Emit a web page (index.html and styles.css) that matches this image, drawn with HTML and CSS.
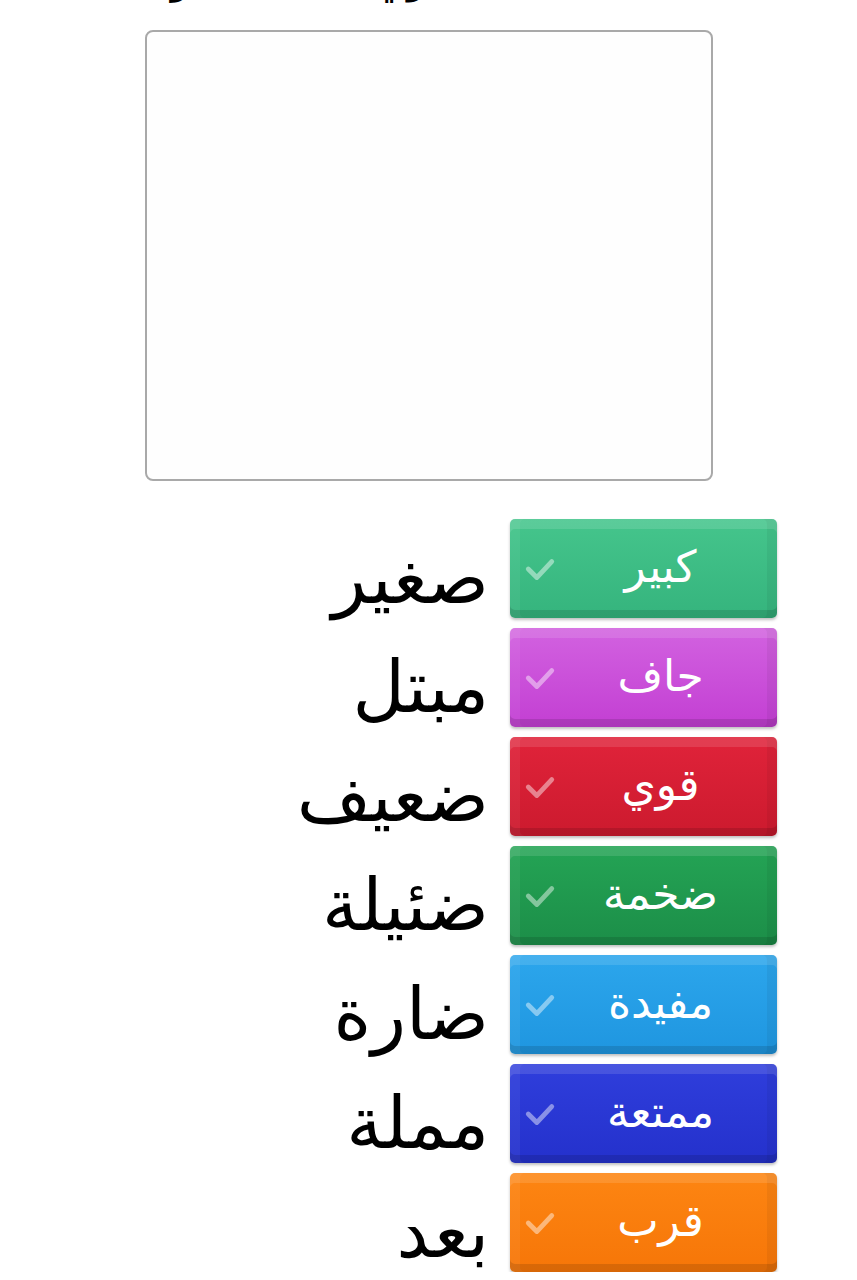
FILE: index.html
```html
<!doctype html>
<html lang="ar" dir="rtl">
<head>
    <meta charset="UTF-8">
    <meta name="viewport" content="width=device-width, initial-scale=1.0">
    <title>الأضداد</title>
    <link rel="stylesheet" href="styles.css">
</head>
<body>
    <h1 class="question">اكتب جملة مفيدة تحتوي على كلمة وضدها</h1>
    <div class="answer">
        <textarea class="answer-box"></textarea>
    </div>
    <ul class="pairs">
        <li class="pair">
            <button class="chip chip-mint"><span class="chip-text">كبير</span><svg class="tick" viewBox="0 0 30 24"><polyline points="4,12 12,20 26,5"/></svg></button>
            <span class="word">صغير</span>
        </li>
        <li class="pair">
            <button class="chip chip-violet"><span class="chip-text">جاف</span><svg class="tick" viewBox="0 0 30 24"><polyline points="4,12 12,20 26,5"/></svg></button>
            <span class="word">مبتل</span>
        </li>
        <li class="pair">
            <button class="chip chip-red"><span class="chip-text">قوي</span><svg class="tick" viewBox="0 0 30 24"><polyline points="4,12 12,20 26,5"/></svg></button>
            <span class="word">ضعيف</span>
        </li>
        <li class="pair">
            <button class="chip chip-green"><span class="chip-text">ضخمة</span><svg class="tick" viewBox="0 0 30 24"><polyline points="4,12 12,20 26,5"/></svg></button>
            <span class="word">ضئيلة</span>
        </li>
        <li class="pair">
            <button class="chip chip-sky"><span class="chip-text">مفيدة</span><svg class="tick" viewBox="0 0 30 24"><polyline points="4,12 12,20 26,5"/></svg></button>
            <span class="word">ضارة</span>
        </li>
        <li class="pair">
            <button class="chip chip-blue"><span class="chip-text">ممتعة</span><svg class="tick" viewBox="0 0 30 24"><polyline points="4,12 12,20 26,5"/></svg></button>
            <span class="word">مملة</span>
        </li>
        <li class="pair">
            <button class="chip chip-orange"><span class="chip-text">قرب</span><svg class="tick" viewBox="0 0 30 24"><polyline points="4,12 12,20 26,5"/></svg></button>
            <span class="word">بعد</span>
        </li>
    </ul>
</body>
</html>
```

FILE: styles.css
```css
html , body
{
    margin : 0px ;
    padding : 0px ;
    background : #ffffff ;
    overflow : hidden ;
}
body
{
    font-family : "DejaVu Sans" , "Noto Sans" , sans-serif ;
    color : #000000 ;
}
.question
{
    margin : -46px 0px 0px 0px ;
    padding : 0px 30px ;
    font-size : 40px ;
    font-weight : normal ;
    line-height : 50px ;
    text-align : center ;
}
.answer
{
    display : flex ;
    justify-content : center ;
    padding-top : 26px ;
}
.answer-box
{
    width : 568px ;
    height : 451px ;
    box-sizing : border-box ;
    margin : 0px ;
    border : 2px solid #a9a9a9 ;
    border-radius : 8px ;
    background : #fefefe ;
    resize : none ;
    outline : none ;
}
.pairs
{
    list-style : none ;
    margin : 0px ;
    padding : 38px 80px 0px 0px ;
    display : flex ;
    flex-direction : column ;
    gap : 10px ;
}
.pair
{
    display : flex ;
    align-items : center ;
    gap : 21px ;
    height : 99px ;
}
.word
{
    font-size : 72px ;
    line-height : 80px ;
    padding-top : 19px ;
}
.chip
{
    position : relative ;
    width : 267px ;
    height : 99px ;
    margin : 0px ;
    padding : 0px ;
    border : none ;
    border-radius : 5px ;
    font-family : inherit ;
    color : #ffffff ;
    cursor : pointer ;
    display : flex ;
    align-items : center ;
    justify-content : center ;
    box-shadow : 0px 2px 3px rgba(0 , 0 , 0 , 0.25) , inset 0px 10px 0px rgba(255 , 255 , 255 , 0.12) , inset 0px -8px 0px rgba(0 , 0 , 0 , 0.12) , inset 10px 0px 0px rgba(255 , 255 , 255 , 0.05) , inset -10px 0px 0px rgba(0 , 0 , 0 , 0.05) ;
}
.chip-text
{
    font-size : 44px ;
    padding-left : 34px ;
    padding-bottom : 4px ;
}
.tick
{
    position : absolute ;
    left : 14px ;
    top : 50% ;
    width : 32px ;
    height : 26px ;
    transform : translateY(-50%) ;
}
.tick polyline
{
    fill : none ;
    stroke : rgba(255 , 255 , 255 , 0.45) ;
    stroke-width : 4.5 ;
    stroke-linecap : round ;
    stroke-linejoin : round ;
}
.chip-mint
{
    background : linear-gradient(#45c58c , #35b47d) ;
}
.chip-violet
{
    background : linear-gradient(#d262e0 , #c33fd3) ;
}
.chip-red
{
    background : linear-gradient(#e0233a , #cc1a2e) ;
}
.chip-green
{
    background : linear-gradient(#24a455 , #1c8e48) ;
}
.chip-sky
{
    background : linear-gradient(#2ca6ec , #1f96e0) ;
}
.chip-blue
{
    background : linear-gradient(#2f3edc , #2431cc) ;
}
.chip-orange
{
    background : linear-gradient(#fd8512 , #f67608) ;
}
```
